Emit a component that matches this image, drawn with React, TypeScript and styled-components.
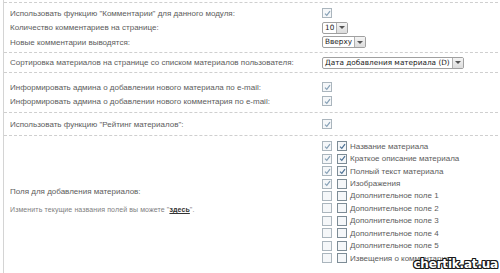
import styled, { createGlobalStyle } from 'styled-components'

const Global = createGlobalStyle`
    html, body {
        margin: 0;
        padding: 0;
        background: #fff;
    }
    body {
        font-family: "Liberation Sans", Arial, sans-serif;
    }
`

const Page = styled.div`
    position: relative;
    width: 500px;
    height: 273px;
    overflow: hidden;
    background: #fff;
    border-left: 1px solid #d4d4d4;
    margin-left: 3px;
    box-sizing: border-box;
    padding-top: 2px;
`

const Section = styled.div<{ pt: number; pb: number }>`
    display: grid;
    grid-template-columns: 312px 1fr;
    border-top: 1px dashed #cfcfcf;
    padding: ${({ pt }) => pt}px 0 ${({ pb }) => pb}px 6px;
    &:last-child {
        border-bottom: 1px dashed #cfcfcf;
    }
`

const Label = styled.div<{ h: number }>`
    height: ${({ h }) => h}px;
    display: flex;
    align-items: center;
    font-size: 8px;
    color: #5c5c5c;
    white-space: nowrap;
`

const Control = styled.div<{ h: number }>`
    height: ${({ h }) => h}px;
    display: flex;
    align-items: center;
`

const SideCell = styled.div`
    display: flex;
    flex-direction: column;
    justify-content: center;
    padding-bottom: 4px;
`

const SideLabel = styled.div`
    font-size: 8px;
    color: #5c5c5c;
    margin-bottom: 10px;
`

const Note = styled.div`
    font-size: 7px;
    color: #808080;
    letter-spacing: 0.1px;
    a {
        color: #333;
        font-weight: bold;
        text-decoration: underline;
    }
`

const Box = styled.span<{ faded?: boolean }>`
    width: 8px;
    height: 8px;
    border: 1px solid ${({ faded }) => (faded ? '#aab5bd' : '#7d8c96')};
    background: #f5f7f9;
    display: inline-flex;
    align-items: center;
    justify-content: center;
    flex-shrink: 0;
    svg {
        display: block;
    }
`

const Select = styled.div`
    display: inline-flex;
    align-items: stretch;
    height: 10px;
    border: 1px solid #a0a0a0;
    border-radius: 2px;
    background: #fff;
    font-family: "DejaVu Sans", Verdana, sans-serif;
    font-size: 7.3px;
    color: #222;
    line-height: 10px;
`

const SelectText = styled.span`
    padding: 0 2px;
    border-right: 1px solid #b0b0b0;
`

const Arrow = styled.span`
    width: 10px;
    background: linear-gradient(#f4f4f4, #dcdcdc);
    display: flex;
    align-items: center;
    justify-content: center;
    &::after {
        content: '';
        border-left: 3px solid transparent;
        border-right: 3px solid transparent;
        border-top: 3px solid #555;
    }
`

const FieldList = styled.div`
    display: flex;
    flex-direction: column;
`

const FieldRow = styled.div`
    height: 12.45px;
    display: flex;
    align-items: center;
    gap: 5px;
    font-size: 8px;
    color: #5c5c5c;
    white-space: nowrap;
`

const FieldName = styled.span`
    margin-left: -2px;
`

const Watermark = styled.div`
    position: absolute;
    right: 5px;
    bottom: 2px;
    font-family: "DejaVu Sans", Verdana, sans-serif;
    font-weight: bold;
    font-size: 12px;
    letter-spacing: -0.2px;
    color: #fff;
    text-shadow:
        -1px -1px 0 #1a1a1a, 1px -1px 0 #1a1a1a, -1px 1px 0 #1a1a1a, 1px 1px 0 #1a1a1a,
        0 -1px 0 #1a1a1a, 0 1px 0 #1a1a1a, -1px 0 0 #1a1a1a, 1px 0 0 #1a1a1a;
`

function Check({ on, faded }: { on: boolean; faded?: boolean }) {
    return (
        <Box faded={faded}>
            {on && (
                <svg width="7" height="7" viewBox="0 0 7 7">
                    <path d="M1 3.6 L2.8 5.4 L6 1.2" fill="none" stroke={faded ? '#86a0b6' : '#4d7296'} strokeWidth="1.2" />
                </svg>
            )}
        </Box>
    )
}

function Dropdown({ value }: { value: string }) {
    return (
        <Select>
            <SelectText>{value}</SelectText>
            <Arrow />
        </Select>
    )
}

const fields = [
    { a: true, b: true, name: 'Название материала' },
    { a: true, b: true, name: 'Краткое описание материала' },
    { a: true, b: true, name: 'Полный текст материала' },
    { a: true, b: false, name: 'Изображения' },
    { a: false, b: false, name: 'Дополнительное поле 1' },
    { a: false, b: false, name: 'Дополнительное поле 2' },
    { a: false, b: false, name: 'Дополнительное поле 3' },
    { a: false, b: false, name: 'Дополнительное поле 4' },
    { a: false, b: false, name: 'Дополнительное поле 5' },
    { a: false, b: false, name: 'Извещения о комментариях' },
]

export default function App() {
    return (
        <Page>
            <Global />
            <Section pt={3} pb={3}>
                <Label h={14}>Использовать функцию "Комментарии" для данного модуля:</Label>
                <Control h={14}><Check on faded /></Control>
                <Label h={15}>Количество комментариев на странице:</Label>
                <Control h={15}><Dropdown value="10" /></Control>
                <Label h={14}>Новые комментарии выводятся:</Label>
                <Control h={14}><Dropdown value="Вверху" /></Control>
            </Section>
            <Section pt={3} pb={3}>
                <Label h={13}>Сортировка материалов на странице со списком материалов пользователя:</Label>
                <Control h={13}><Dropdown value="Дата добавления материала (D)" /></Control>
            </Section>
            <Section pt={7} pb={4}>
                <Label h={14}>Информировать админа о добавлении нового материала по e-mail:</Label>
                <Control h={14}><Check on faded /></Control>
                <Label h={14}>Информировать админа о добавлении нового комментария по e-mail:</Label>
                <Control h={14}><Check on faded /></Control>
            </Section>
            <Section pt={4} pb={4}>
                <Label h={14}>Использовать функцию "Рейтинг материалов":</Label>
                <Control h={14}><Check on faded /></Control>
            </Section>
            <Section pt={4} pb={1}>
                <SideCell>
                    <SideLabel>Поля для добавления материалов:</SideLabel>
                    <Note>Изменить текущие названия полей вы можете "<a>здесь</a>".</Note>
                </SideCell>
                <FieldList>
                    {fields.map((f) => (
                        <FieldRow key={f.name}>
                            <Check on={f.a} faded />
                            <Check on={f.b} />
                            <FieldName>{f.name}</FieldName>
                        </FieldRow>
                    ))}
                </FieldList>
            </Section>
            <Watermark>chertik.at.ua</Watermark>
        </Page>
    )
}
